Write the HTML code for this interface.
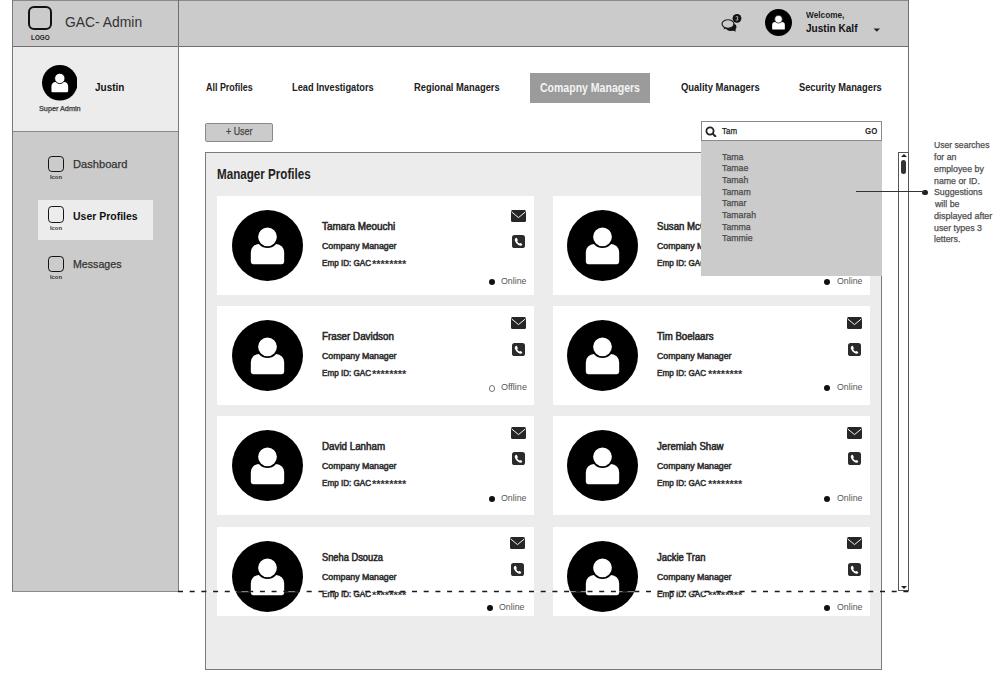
<!DOCTYPE html>
<html><head><meta charset="utf-8">
<style>
*{margin:0;padding:0;box-sizing:border-box}
html,body{width:1000px;height:684px;background:#fff;overflow:hidden;position:relative;font-family:"Liberation Sans",sans-serif}
.a{position:absolute}
.t{position:absolute;white-space:nowrap;line-height:1;transform-origin:0 0}
</style></head><body>
<svg width="0" height="0" style="position:absolute">
<defs>
<g id="av">
<circle cx="0" cy="0" r="50" fill="#000"/>
<path d="M-23.5 23 V10 A11.5 11.5 0 0 1 -12 -2 H12 A11.5 11.5 0 0 1 23.5 10 V23 A3.3 3.3 0 0 1 20.2 26.3 H-20.2 A3.3 3.3 0 0 1 -23.5 23 Z" fill="#fff"/>
<circle cx="0" cy="-12.3" r="14.5" fill="#fff" stroke="#000" stroke-width="2.6"/>
</g>
<g id="mail">
<rect x="0" y="0" width="15" height="12" rx="1.5" fill="#262626"/>
<path d="M0.6 1.9 L7.5 7.6 L14.4 1.9" fill="none" stroke="#fff" stroke-width="0.95"/>
</g>
<g id="phone">
<rect x="0" y="0" width="13" height="13" rx="2.6" fill="#2b2b2b"/>
<path d="M3.2 3.6 Q4 2.6 4.9 2.9 L5.8 4.9 Q5.9 5.5 5.2 5.9 Q5.6 7.5 7.3 8.5 Q7.8 7.8 8.3 7.9 L10.2 9 Q10.4 9.8 9.6 10.5 Q8.4 11.2 6.4 10 Q3.6 8.2 2.8 5.5 Q2.6 4.4 3.2 3.6 Z" fill="#fff"/>
</g>
</defs></svg>
<div class="a" style="left:12.00px;top:0.00px;width:897.00px;height:592.00px;background:#fff"></div>
<div class="a" style="left:12.00px;top:0.00px;width:897.00px;height:47.00px;background:#cbcbcb"></div>
<div class="a" style="left:12.00px;top:0.00px;width:897.00px;height:1.00px;background:#8a8a8a"></div>
<div class="a" style="left:12.00px;top:46.00px;width:897.00px;height:1.00px;background:#6f6f6f"></div>
<div class="a" style="left:178.00px;top:0.00px;width:1.00px;height:47.00px;background:#6f6f6f"></div>
<div class="a" style="left:12.00px;top:47.00px;width:167.00px;height:85.00px;background:#ececec"></div>
<div class="a" style="left:12.00px;top:131.00px;width:167.00px;height:1.50px;background:#8a8a8a"></div>
<div class="a" style="left:12.00px;top:132.00px;width:167.00px;height:459.00px;background:#cbcbcb"></div>
<div class="a" style="left:12.00px;top:0.00px;width:1.00px;height:592.00px;background:#7a7a7a"></div>
<div class="a" style="left:178.00px;top:46.00px;width:1.00px;height:546.00px;background:#7a7a7a"></div>
<div class="a" style="left:12.00px;top:590.50px;width:167.00px;height:1.00px;background:#8a8a8a"></div>
<div class="a" style="left:908.00px;top:0.00px;width:1.00px;height:591.00px;background:#6f6f6f"></div>
<div class="a" style="left:38.00px;top:200.00px;width:115.00px;height:39.60px;background:#ececec"></div>
<div class="a" style="left:28.00px;top:6.00px;width:24.00px;height:24.00px;border:2.6px solid #111;border-radius:6px;box-sizing:border-box"></div>
<div class="a" style="left:47.70px;top:156.10px;width:16.10px;height:16.30px;border:1.9px solid #151515;border-radius:3.8px;box-sizing:border-box"></div>
<div class="a" style="left:47.70px;top:206.40px;width:16.10px;height:16.30px;border:1.9px solid #151515;border-radius:3.8px;box-sizing:border-box"></div>
<div class="a" style="left:47.70px;top:256.20px;width:16.10px;height:16.30px;border:1.9px solid #151515;border-radius:3.8px;box-sizing:border-box"></div>
<svg class="a" style="left:41.60px;top:65.00px" width="35.60" height="35.60" viewBox="-50 -50 100 100"><use href="#av"/></svg>
<svg class="a" style="left:765.10px;top:9.00px" width="27.00" height="27.00" viewBox="-50 -50 100 100"><use href="#av"/></svg>
<svg class="a" style="left:720px;top:12px" width="24" height="22" viewBox="0 0 24 22"><ellipse cx="10.9" cy="14.9" rx="5.6" ry="4" fill="#151515"/><path d="M12.8 18.2 L15.6 19.7 L15.5 16.3 Z" fill="#151515"/><ellipse cx="8" cy="12" rx="5.9" ry="4.05" fill="#cbcbcb" stroke="#222" stroke-width="1.3"/><path d="M4.3 14.6 L3.6 17.6 L6.9 15.9 Z" fill="#222"/><ellipse cx="8" cy="12" rx="5.25" ry="3.4" fill="#cbcbcb"/><circle cx="17" cy="6.3" r="4.4" fill="#111"/><path d="M15.7 4.9 Q16.9 4.2 17.9 4.8 Q18.4 5.8 16.9 6.3 Q18.6 6.8 18 7.8 Q16.9 8.6 15.7 7.9" fill="none" stroke="#bbb" stroke-width="0.9"/></svg>
<svg class="a" style="left:873px;top:28px" width="8" height="5" viewBox="0 0 8 5"><path d="M0.6 0.4 L7 0.4 L3.8 3.8 Z" fill="#222"/></svg>
<div class="a" style="left:530.00px;top:72.80px;width:120.00px;height:30.40px;background:#9b9b9b"></div>
<div class="a" style="left:205.00px;top:123.00px;width:67.60px;height:19.00px;background:#cbcbcb;border:1px solid #8a8a8a;border-radius:2px;box-sizing:border-box"></div>
<div class="a" style="left:204.80px;top:152.00px;width:677.20px;height:517.50px;background:#ececec;border:1px solid #7a7a7a;box-sizing:border-box"></div>
<div class="a" style="left:216.90px;top:196.00px;width:317.60px;height:99.00px;background:#fff"></div>
<svg class="a" style="left:231.60px;top:210.00px" width="71.00" height="71.00" viewBox="-50 -50 100 100"><use href="#av"/></svg>
<svg class="a" style="left:511.20px;top:210.00px" width="15.00" height="12.00" viewBox="0 0 15 12"><use href="#mail"/></svg>
<svg class="a" style="left:512.20px;top:235.30px" width="13.00" height="13.00" viewBox="0 0 13 13"><use href="#phone"/></svg>
<div class="a" style="left:488.60px;top:278.70px;width:6px;height:6px;border-radius:50%;background:#111"></div>
<div class="a" style="left:216.90px;top:306.00px;width:317.60px;height:99.00px;background:#fff"></div>
<svg class="a" style="left:231.60px;top:320.00px" width="71.00" height="71.00" viewBox="-50 -50 100 100"><use href="#av"/></svg>
<svg class="a" style="left:511.20px;top:316.50px" width="15.00" height="12.00" viewBox="0 0 15 12"><use href="#mail"/></svg>
<svg class="a" style="left:512.20px;top:342.50px" width="13.00" height="13.00" viewBox="0 0 13 13"><use href="#phone"/></svg>
<div class="a" style="left:488.60px;top:385.30px;width:6.4px;height:6.4px;border-radius:50%;border:1.1px solid #777;box-sizing:border-box"></div>
<div class="a" style="left:216.90px;top:416.00px;width:317.60px;height:99.00px;background:#fff"></div>
<svg class="a" style="left:231.60px;top:430.00px" width="71.00" height="71.00" viewBox="-50 -50 100 100"><use href="#av"/></svg>
<svg class="a" style="left:511.20px;top:426.90px" width="15.00" height="12.00" viewBox="0 0 15 12"><use href="#mail"/></svg>
<svg class="a" style="left:512.20px;top:452.40px" width="13.00" height="13.00" viewBox="0 0 13 13"><use href="#phone"/></svg>
<div class="a" style="left:488.60px;top:496.00px;width:6px;height:6px;border-radius:50%;background:#111"></div>
<div class="a" style="left:216.90px;top:527.00px;width:317.60px;height:89.00px;background:#fff"></div>
<svg class="a" style="left:231.60px;top:541.00px" width="71.00" height="71.00" viewBox="-50 -50 100 100"><use href="#av"/></svg>
<svg class="a" style="left:509.70px;top:536.80px" width="15.00" height="12.00" viewBox="0 0 15 12"><use href="#mail"/></svg>
<svg class="a" style="left:510.70px;top:562.90px" width="13.00" height="13.00" viewBox="0 0 13 13"><use href="#phone"/></svg>
<div class="a" style="left:486.60px;top:605.30px;width:6px;height:6px;border-radius:50%;background:#111"></div>
<div class="a" style="left:552.60px;top:196.00px;width:317.60px;height:99.00px;background:#fff"></div>
<svg class="a" style="left:567.30px;top:210.00px" width="71.00" height="71.00" viewBox="-50 -50 100 100"><use href="#av"/></svg>
<svg class="a" style="left:846.90px;top:210.00px" width="15.00" height="12.00" viewBox="0 0 15 12"><use href="#mail"/></svg>
<svg class="a" style="left:847.90px;top:235.30px" width="13.00" height="13.00" viewBox="0 0 13 13"><use href="#phone"/></svg>
<div class="a" style="left:824.30px;top:278.70px;width:6px;height:6px;border-radius:50%;background:#111"></div>
<div class="a" style="left:552.60px;top:306.00px;width:317.60px;height:99.00px;background:#fff"></div>
<svg class="a" style="left:567.30px;top:320.00px" width="71.00" height="71.00" viewBox="-50 -50 100 100"><use href="#av"/></svg>
<svg class="a" style="left:846.90px;top:316.50px" width="15.00" height="12.00" viewBox="0 0 15 12"><use href="#mail"/></svg>
<svg class="a" style="left:847.90px;top:342.50px" width="13.00" height="13.00" viewBox="0 0 13 13"><use href="#phone"/></svg>
<div class="a" style="left:824.30px;top:385.30px;width:6px;height:6px;border-radius:50%;background:#111"></div>
<div class="a" style="left:552.60px;top:416.00px;width:317.60px;height:99.00px;background:#fff"></div>
<svg class="a" style="left:567.30px;top:430.00px" width="71.00" height="71.00" viewBox="-50 -50 100 100"><use href="#av"/></svg>
<svg class="a" style="left:846.90px;top:426.90px" width="15.00" height="12.00" viewBox="0 0 15 12"><use href="#mail"/></svg>
<svg class="a" style="left:847.90px;top:452.40px" width="13.00" height="13.00" viewBox="0 0 13 13"><use href="#phone"/></svg>
<div class="a" style="left:824.30px;top:496.00px;width:6px;height:6px;border-radius:50%;background:#111"></div>
<div class="a" style="left:552.60px;top:527.00px;width:317.60px;height:89.00px;background:#fff"></div>
<svg class="a" style="left:567.30px;top:541.00px" width="71.00" height="71.00" viewBox="-50 -50 100 100"><use href="#av"/></svg>
<svg class="a" style="left:846.90px;top:536.80px" width="15.00" height="12.00" viewBox="0 0 15 12"><use href="#mail"/></svg>
<svg class="a" style="left:847.90px;top:562.90px" width="13.00" height="13.00" viewBox="0 0 13 13"><use href="#phone"/></svg>
<div class="a" style="left:824.30px;top:605.30px;width:6px;height:6px;border-radius:50%;background:#111"></div>
<div class="a" style="left:898.30px;top:152.30px;width:10.30px;height:439.00px;background:#fff;border:1px solid #555;box-sizing:border-box"></div>
<svg class="a" style="left:900px;top:153px" width="8" height="5" viewBox="0 0 8 5"><path d="M1 4 L7 4 L4 1 Z" fill="#222"/></svg>
<div class="a" style="left:901.10px;top:160.40px;width:4.90px;height:13.40px;background:#333;border-radius:2.5px"></div>
<svg class="a" style="left:900px;top:585px" width="8" height="5" viewBox="0 0 8 5"><path d="M1 1 L7 1 L4 4 Z" fill="#222"/></svg>
<svg class="a" style="left:178px;top:589.5px;z-index:4" width="731" height="3" viewBox="0 0 731 3"><line x1="0" y1="1.6" x2="731" y2="1.6" stroke="rgba(255,255,255,0.5)" stroke-width="1.4"/><line x1="0" y1="1.6" x2="731" y2="1.6" stroke="#1a1a1a" stroke-width="1.5" stroke-dasharray="5 6.7"/></svg>
<div class="a" style="left:700.90px;top:120.90px;width:181.00px;height:20.40px;background:#fff;border:1px solid #8a8a8a;box-sizing:border-box;z-index:2"></div>
<svg class="a" style="left:705px;top:126px;z-index:3" width="12" height="11" viewBox="0 0 12 11"><circle cx="5" cy="5" r="3.6" fill="none" stroke="#222" stroke-width="1.8"/><path d="M7.6 7.6 L10.3 10.2" stroke="#222" stroke-width="2" stroke-linecap="round"/></svg>
<div class="a" style="left:701.00px;top:141.30px;width:181.00px;height:134.80px;background:#cbcbcb;z-index:2"></div>
<div class="a" style="left:856.00px;top:190.90px;width:69.00px;height:1.30px;background:#333;z-index:4"></div>
<div class="a" style="left:922.1px;top:189.5px;width:5.6px;height:5.6px;border-radius:50%;background:#222"></div>
<div class="t" style="left:65.00px;top:14.17px;font-size:15.262px;color:#333;transform:scaleX(0.9106)">GAC- Admin</div>
<div class="t" style="left:30.50px;top:34.17px;font-size:7.267px;font-weight:bold;color:#222;transform:scaleX(0.8753)">LOGO</div>
<div class="t" style="left:805.80px;top:10.94px;font-size:8.721px;font-weight:bold;color:#222;transform:scaleX(0.9472)">Welcome,</div>
<div class="t" style="left:805.80px;top:23.57px;font-size:10.465px;font-weight:bold;color:#111;transform:scaleX(0.9638)">Justin Kalf</div>
<div class="t" style="left:95.00px;top:82.57px;font-size:10.465px;font-weight:bold;color:#111;transform:scaleX(0.9540)">Justin</div>
<div class="t" style="left:38.70px;top:105.17px;font-size:7.267px;-webkit-text-stroke:0.25px #333;color:#333;transform:scaleX(1.0029)">Super Admin</div>
<div class="t" style="left:72.90px;top:157.99px;font-size:11.628px;-webkit-text-stroke:0.25px #333;color:#333;transform:scaleX(0.9585)">Dashboard</div>
<div class="t" style="left:72.90px;top:210.78px;font-size:11.047px;font-weight:bold;color:#111;transform:scaleX(0.9496)">User Profiles</div>
<div class="t" style="left:72.90px;top:258.78px;font-size:11.047px;-webkit-text-stroke:0.25px #333;color:#333;transform:scaleX(0.9653)">Messages</div>
<div class="t" style="left:49.70px;top:175.32px;font-size:5.959px;font-weight:bold;color:#333;transform:scaleX(0.9778)">Icon</div>
<div class="t" style="left:49.70px;top:226.32px;font-size:5.959px;font-weight:bold;color:#333;transform:scaleX(0.9778)">Icon</div>
<div class="t" style="left:49.70px;top:275.32px;font-size:5.959px;font-weight:bold;color:#333;transform:scaleX(0.9778)">Icon</div>
<div class="t" style="left:205.60px;top:82.71px;font-size:10.174px;font-weight:bold;color:#222;transform:scaleX(0.8801)">All Profiles</div>
<div class="t" style="left:292.00px;top:82.71px;font-size:10.174px;font-weight:bold;color:#222;transform:scaleX(0.9102)">Lead Investigators</div>
<div class="t" style="left:414.30px;top:82.71px;font-size:10.174px;font-weight:bold;color:#222;transform:scaleX(0.9200)">Regional Managers</div>
<div class="t" style="left:539.60px;top:82.05px;font-size:12.500px;font-weight:bold;color:#f4f4f4;transform:scaleX(0.8415)">Comapny Managers</div>
<div class="t" style="left:680.90px;top:82.71px;font-size:10.174px;font-weight:bold;color:#222;transform:scaleX(0.9293)">Quality Managers</div>
<div class="t" style="left:798.70px;top:82.71px;font-size:10.174px;font-weight:bold;color:#222;transform:scaleX(0.9154)">Security Managers</div>
<div class="t" style="left:225.80px;top:126.71px;font-size:10.174px;-webkit-text-stroke:0.25px #444;color:#444;transform:scaleX(0.8762)">+ User</div>
<div class="t" style="left:216.90px;top:167.90px;font-size:13.808px;font-weight:bold;color:#222;transform:scaleX(0.8430)">Manager Profiles</div>
<div class="t" style="left:321.70px;top:221.71px;font-size:10.174px;-webkit-text-stroke:0.55px #2a2a2a;color:#2a2a2a;transform:scaleX(0.9757)">Tamara Meouchi</div>
<div class="t" style="left:321.70px;top:241.72px;font-size:9.157px;-webkit-text-stroke:0.55px #303030;color:#303030;transform:scaleX(0.9589)">Company Manager</div>
<div class="t" style="left:321.70px;top:258.72px;font-size:9.157px;-webkit-text-stroke:0.55px #303030;color:#303030;transform:scaleX(0.8877)">Emp ID: GAC</div>
<div class="t" style="left:372.10px;top:258.80px;font-size:11.000px;font-weight:bold;color:#333;transform:scaleX(1.0010)">********</div>
<div class="t" style="left:500.90px;top:276.00px;font-size:9.593px;color:#555;transform:scaleX(0.9211)">Online</div>
<div class="t" style="left:321.70px;top:331.71px;font-size:10.174px;-webkit-text-stroke:0.55px #2a2a2a;color:#2a2a2a;transform:scaleX(0.9654)">Fraser Davidson</div>
<div class="t" style="left:321.70px;top:351.72px;font-size:9.157px;-webkit-text-stroke:0.55px #303030;color:#303030;transform:scaleX(0.9589)">Company Manager</div>
<div class="t" style="left:321.70px;top:368.72px;font-size:9.157px;-webkit-text-stroke:0.55px #303030;color:#303030;transform:scaleX(0.8877)">Emp ID: GAC</div>
<div class="t" style="left:372.10px;top:368.80px;font-size:11.000px;font-weight:bold;color:#333;transform:scaleX(1.0010)">********</div>
<div class="t" style="left:500.90px;top:382.00px;font-size:9.593px;color:#555;transform:scaleX(0.9418)">Offline</div>
<div class="t" style="left:321.70px;top:441.71px;font-size:10.174px;-webkit-text-stroke:0.55px #2a2a2a;color:#2a2a2a;transform:scaleX(0.9626)">David Lanham</div>
<div class="t" style="left:321.70px;top:461.72px;font-size:9.157px;-webkit-text-stroke:0.55px #303030;color:#303030;transform:scaleX(0.9589)">Company Manager</div>
<div class="t" style="left:321.70px;top:478.72px;font-size:9.157px;-webkit-text-stroke:0.55px #303030;color:#303030;transform:scaleX(0.8877)">Emp ID: GAC</div>
<div class="t" style="left:372.10px;top:478.80px;font-size:11.000px;font-weight:bold;color:#333;transform:scaleX(1.0010)">********</div>
<div class="t" style="left:500.90px;top:493.00px;font-size:9.593px;color:#555;transform:scaleX(0.9211)">Online</div>
<div class="t" style="left:321.70px;top:552.71px;font-size:10.174px;-webkit-text-stroke:0.55px #2a2a2a;color:#2a2a2a;transform:scaleX(0.9152)">Sneha Dsouza</div>
<div class="t" style="left:321.70px;top:572.72px;font-size:9.157px;-webkit-text-stroke:0.55px #303030;color:#303030;transform:scaleX(0.9589)">Company Manager</div>
<div class="t" style="left:321.70px;top:589.72px;font-size:9.157px;-webkit-text-stroke:0.55px #303030;color:#303030;transform:scaleX(0.8877)">Emp ID: GAC</div>
<div class="t" style="left:372.10px;top:589.80px;font-size:11.000px;font-weight:bold;color:#333;transform:scaleX(1.0010)">********</div>
<div class="t" style="left:498.90px;top:602.00px;font-size:9.593px;color:#555;transform:scaleX(0.9211)">Online</div>
<div class="t" style="left:657.40px;top:221.71px;font-size:10.174px;-webkit-text-stroke:0.55px #2a2a2a;color:#2a2a2a;transform:scaleX(0.9503)">Susan McCarthy</div>
<div class="t" style="left:657.40px;top:241.72px;font-size:9.157px;-webkit-text-stroke:0.55px #303030;color:#303030;transform:scaleX(0.9589)">Company Manager</div>
<div class="t" style="left:657.40px;top:258.72px;font-size:9.157px;-webkit-text-stroke:0.55px #303030;color:#303030;transform:scaleX(0.8877)">Emp ID: GAC</div>
<div class="t" style="left:707.80px;top:258.80px;font-size:11.000px;font-weight:bold;color:#333;transform:scaleX(1.0010)">********</div>
<div class="t" style="left:836.60px;top:276.00px;font-size:9.593px;color:#555;transform:scaleX(0.9211)">Online</div>
<div class="t" style="left:657.40px;top:331.71px;font-size:10.174px;-webkit-text-stroke:0.55px #2a2a2a;color:#2a2a2a;transform:scaleX(0.9500)">Tim Boelaars</div>
<div class="t" style="left:657.40px;top:351.72px;font-size:9.157px;-webkit-text-stroke:0.55px #303030;color:#303030;transform:scaleX(0.9589)">Company Manager</div>
<div class="t" style="left:657.40px;top:368.72px;font-size:9.157px;-webkit-text-stroke:0.55px #303030;color:#303030;transform:scaleX(0.8877)">Emp ID: GAC</div>
<div class="t" style="left:707.80px;top:368.80px;font-size:11.000px;font-weight:bold;color:#333;transform:scaleX(1.0010)">********</div>
<div class="t" style="left:836.60px;top:382.00px;font-size:9.593px;color:#555;transform:scaleX(0.9211)">Online</div>
<div class="t" style="left:657.40px;top:441.71px;font-size:10.174px;-webkit-text-stroke:0.55px #2a2a2a;color:#2a2a2a;transform:scaleX(0.9503)">Jeremiah Shaw</div>
<div class="t" style="left:657.40px;top:461.72px;font-size:9.157px;-webkit-text-stroke:0.55px #303030;color:#303030;transform:scaleX(0.9589)">Company Manager</div>
<div class="t" style="left:657.40px;top:478.72px;font-size:9.157px;-webkit-text-stroke:0.55px #303030;color:#303030;transform:scaleX(0.8877)">Emp ID: GAC</div>
<div class="t" style="left:707.80px;top:478.80px;font-size:11.000px;font-weight:bold;color:#333;transform:scaleX(1.0010)">********</div>
<div class="t" style="left:836.60px;top:493.00px;font-size:9.593px;color:#555;transform:scaleX(0.9211)">Online</div>
<div class="t" style="left:657.40px;top:552.71px;font-size:10.174px;-webkit-text-stroke:0.55px #2a2a2a;color:#2a2a2a;transform:scaleX(0.9326)">Jackie Tran</div>
<div class="t" style="left:657.40px;top:572.72px;font-size:9.157px;-webkit-text-stroke:0.55px #303030;color:#303030;transform:scaleX(0.9589)">Company Manager</div>
<div class="t" style="left:657.40px;top:589.72px;font-size:9.157px;-webkit-text-stroke:0.55px #303030;color:#303030;transform:scaleX(0.8877)">Emp ID: GAC</div>
<div class="t" style="left:707.80px;top:589.80px;font-size:11.000px;font-weight:bold;color:#333;transform:scaleX(1.0010)">********</div>
<div class="t" style="left:836.60px;top:602.00px;font-size:9.593px;color:#555;transform:scaleX(0.9211)">Online</div>
<div class="t" style="left:722.30px;top:126.65px;font-size:9.302px;-webkit-text-stroke:0.25px #222;color:#222;transform:scaleX(0.8530);z-index:3">Tam</div>
<div class="t" style="left:864.70px;top:126.08px;font-size:9.448px;font-weight:bold;color:#222;transform:scaleX(0.8368);z-index:3">GO</div>
<div class="t" style="left:722.30px;top:152.72px;font-size:9.157px;-webkit-text-stroke:0.25px #4a4a4a;color:#4a4a4a;transform:scaleX(0.9583);z-index:3">Tama</div>
<div class="t" style="left:722.30px;top:163.72px;font-size:9.157px;-webkit-text-stroke:0.25px #4a4a4a;color:#4a4a4a;transform:scaleX(0.9583);z-index:3">Tamae</div>
<div class="t" style="left:722.30px;top:175.72px;font-size:9.157px;-webkit-text-stroke:0.25px #4a4a4a;color:#4a4a4a;transform:scaleX(0.9583);z-index:3">Tamah</div>
<div class="t" style="left:722.30px;top:187.72px;font-size:9.157px;-webkit-text-stroke:0.25px #4a4a4a;color:#4a4a4a;transform:scaleX(0.9583);z-index:3">Tamam</div>
<div class="t" style="left:722.30px;top:198.72px;font-size:9.157px;-webkit-text-stroke:0.25px #4a4a4a;color:#4a4a4a;transform:scaleX(0.9583);z-index:3">Tamar</div>
<div class="t" style="left:722.30px;top:210.72px;font-size:9.157px;-webkit-text-stroke:0.25px #4a4a4a;color:#4a4a4a;transform:scaleX(0.9583);z-index:3">Tamarah</div>
<div class="t" style="left:722.30px;top:222.72px;font-size:9.157px;-webkit-text-stroke:0.25px #4a4a4a;color:#4a4a4a;transform:scaleX(0.9583);z-index:3">Tamma</div>
<div class="t" style="left:722.30px;top:233.72px;font-size:9.157px;-webkit-text-stroke:0.25px #4a4a4a;color:#4a4a4a;transform:scaleX(0.9583);z-index:3">Tammie</div>
<div class="t" style="left:934.40px;top:140.87px;font-size:8.866px;-webkit-text-stroke:0.25px #4f4f4f;color:#4f4f4f;transform:scaleX(0.9708)">User searches</div>
<div class="t" style="left:934.40px;top:152.87px;font-size:8.866px;-webkit-text-stroke:0.25px #4f4f4f;color:#4f4f4f;transform:scaleX(0.9917)">for an</div>
<div class="t" style="left:934.40px;top:164.87px;font-size:8.866px;-webkit-text-stroke:0.25px #4f4f4f;color:#4f4f4f;transform:scaleX(0.9917)">employee by</div>
<div class="t" style="left:934.40px;top:176.87px;font-size:8.866px;-webkit-text-stroke:0.25px #4f4f4f;color:#4f4f4f;transform:scaleX(0.9917)">name or ID.</div>
<div class="t" style="left:934.40px;top:187.87px;font-size:8.866px;-webkit-text-stroke:0.25px #4f4f4f;color:#4f4f4f;transform:scaleX(0.9917)">Suggestions</div>
<div class="t" style="left:935.39px;top:199.87px;font-size:8.866px;-webkit-text-stroke:0.25px #4f4f4f;color:#4f4f4f;transform:scaleX(0.9917)">will be</div>
<div class="t" style="left:934.40px;top:211.87px;font-size:8.866px;-webkit-text-stroke:0.25px #4f4f4f;color:#4f4f4f;transform:scaleX(1.0127)">displayed after</div>
<div class="t" style="left:934.40px;top:223.87px;font-size:8.866px;-webkit-text-stroke:0.25px #4f4f4f;color:#4f4f4f;transform:scaleX(0.9917)">user types 3</div>
<div class="t" style="left:934.40px;top:234.87px;font-size:8.866px;-webkit-text-stroke:0.25px #4f4f4f;color:#4f4f4f;transform:scaleX(0.9917)">letters.</div>
</body></html>
